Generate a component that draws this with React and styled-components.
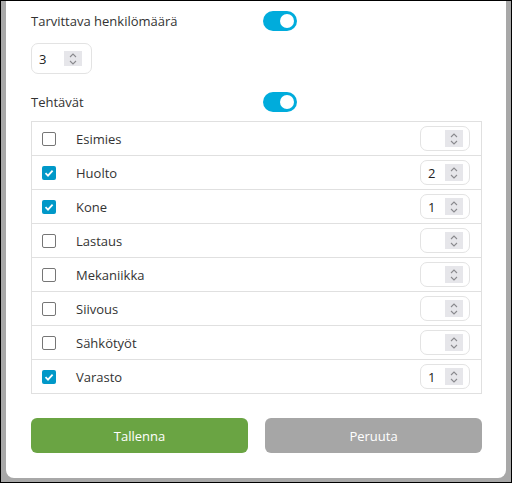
import styled, { createGlobalStyle } from "styled-components";

const GlobalStyle = createGlobalStyle`
  html, body {
    margin: 0;
    padding: 0;
    height: 100%;
  }
  body {
    font-family: "Open Sans", "Noto Sans", sans-serif;
    background: #a8a8a8;
    box-sizing: border-box;
    border: 1px solid #000;
    height: 483px;
    overflow: hidden;
  }
  #root {
    height: 100%;
  }
`;

const Backdrop = styled.div`
  height: 100%;
  padding: 0 5px 4px 5px;
  box-sizing: border-box;
  display: flex;
  flex-direction: column;
`;

const Modal = styled.div`
  flex: 1;
  background: #fff;
  border-radius: 0 0 8px 8px;
  padding: 7px 24px 0 25px;
  box-sizing: border-box;
`;

const FieldRow = styled.div`
  display: flex;
  align-items: center;
  height: 26px;
  margin-top: ${(p) => p.$top || 0}px;
`;

const Label = styled.span`
  width: 232px;
  font-size: 13px;
  color: #333;
`;

const Toggle = styled.span`
  width: 34px;
  height: 20px;
  border-radius: 10px;
  background: #00acdc;
  position: relative;
  &::after {
    content: "";
    position: absolute;
    right: 3px;
    top: 3px;
    width: 14px;
    height: 14px;
    border-radius: 50%;
    background: #fff;
  }
`;

const NumberBox = styled.div`
  display: flex;
  align-items: center;
  width: ${(p) => p.$w}px;
  height: ${(p) => p.$h}px;
  margin-top: ${(p) => p.$top || 0}px;
  border: 1px solid #e3e3e3;
  border-radius: 7px;
  box-sizing: border-box;
  padding: 0 ${(p) => p.$pr}px 0 7px;
  font-size: 13px;
  color: #222;
`;

const Spinner = styled.span`
  margin-left: auto;
  width: 18px;
  height: ${(p) => p.$h}px;
  background: #e6e6ea;
  display: flex;
  align-items: center;
  justify-content: center;
`;

const Table = styled.div`
  margin-top: 6px;
  border: 1px solid #e0e0e0;
`;

const Row = styled.div`
  display: flex;
  align-items: center;
  height: 33px;
  padding: 0 11px 0 10px;
  border-top: ${(p) => (p.$first ? "none" : "1px solid #e0e0e0")};
`;

const Check = styled.span`
  width: 14px;
  height: 14px;
  box-sizing: border-box;
  border-radius: 2px;
  border: ${(p) => (p.$on ? "none" : "1px solid #767676")};
  background: ${(p) => (p.$on ? "#0098c8" : "#fff")};
  display: flex;
  align-items: center;
  justify-content: center;
`;

const RowLabel = styled.span`
  flex: 1;
  margin-left: 20px;
  font-size: 13px;
  color: #333;
`;

const Buttons = styled.div`
  display: grid;
  grid-template-columns: 1fr 1fr;
  gap: 17px;
  margin-top: 24px;
`;

const Button = styled.button`
  height: 35px;
  border: none;
  border-radius: 6px;
  background: ${(p) => (p.$variant === "gray" ? "#a6a6a6" : "#6aa443")};
  color: #fff;
  font-family: inherit;
  font-size: 13px;
`;

const Arrows = () => (
  <svg width="10" height="14" viewBox="0 0 10 14">
    <path d="M2 5 L5 2 L8 5" fill="none" stroke="#8a8a8e" strokeWidth="1.1" />
    <path d="M2 9 L5 12 L8 9" fill="none" stroke="#8a8a8e" strokeWidth="1.1" />
  </svg>
);

const Tick = () => (
  <svg width="10" height="10" viewBox="0 0 10 10">
    <path d="M1.5 5.2 L4 7.6 L8.6 2.6" fill="none" stroke="#fff" strokeWidth="1.8" />
  </svg>
);

const tasks = [
  { name: "Esimies", on: false, value: "" },
  { name: "Huolto", on: true, value: "2" },
  { name: "Kone", on: true, value: "1" },
  { name: "Lastaus", on: false, value: "" },
  { name: "Mekaniikka", on: false, value: "" },
  { name: "Siivous", on: false, value: "" },
  { name: "Sähkötyöt", on: false, value: "" },
  { name: "Varasto", on: true, value: "1" },
];

export default function App() {
  return (
    <>
      <GlobalStyle />
      <Backdrop>
        <Modal>
          <FieldRow>
            <Label>Tarvittava henkilömäärä</Label>
            <Toggle />
          </FieldRow>
          <NumberBox $w={61} $h={31} $pr={9} $top={9}>
            3
            <Spinner $h={15}>
              <Arrows />
            </Spinner>
          </NumberBox>
          <FieldRow $top={15}>
            <Label>Tehtävät</Label>
            <Toggle />
          </FieldRow>
          <Table>
            {tasks.map((t, i) => (
              <Row key={t.name} $first={i === 0}>
                <Check $on={t.on}>{t.on && <Tick />}</Check>
                <RowLabel>{t.name}</RowLabel>
                <NumberBox $w={50} $h={25} $pr={6}>
                  {t.value}
                  <Spinner $h={17}>
                    <Arrows />
                  </Spinner>
                </NumberBox>
              </Row>
            ))}
          </Table>
          <Buttons>
            <Button>Tallenna</Button>
            <Button $variant="gray">Peruuta</Button>
          </Buttons>
        </Modal>
      </Backdrop>
    </>
  );
}
